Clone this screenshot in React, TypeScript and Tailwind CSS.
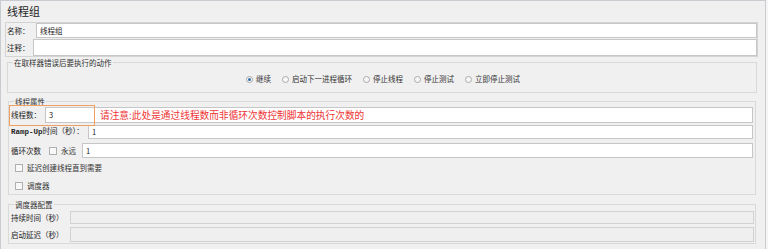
import React from "react";

const cjk = "font-['Noto_Sans_CJK_SC','Noto_Sans',sans-serif]";

function Box({ className = "", disabled = false, children }: { className?: string; disabled?: boolean; children?: React.ReactNode }) {
  return (
    <div
      className={`flex items-center border ${disabled ? "bg-[#efefef] border-[#d2d2d2]" : "bg-white border-[#c6c6c6]"} pl-[3px] text-[7.5px] text-[#222] ${className}`}
    >
      {children}
    </div>
  );
}

function Radio({ checked = false, label }: { checked?: boolean; label: string }) {
  return (
    <div className="flex items-center gap-[3px]">
      <span className="flex h-[7px] w-[7px] items-center justify-center rounded-full border border-[#a9a9a9] bg-[#f7f7f7]">
        {checked && <span className="h-[3px] w-[3px] rounded-full bg-[#2f6fb0]" />}
      </span>
      <span className="text-[7.5px] leading-[10px] text-[#333]">{label}</span>
    </div>
  );
}

function Check({ label }: { label: string }) {
  return (
    <div className="flex items-center gap-[4px]">
      <span className="h-[8px] w-[8px] border border-[#b0b0b0] bg-[#f8f8f8]" />
      <span className="text-[7.5px] leading-[10px] text-[#333]">{label}</span>
    </div>
  );
}

function Group({ title, className = "", children }: { title: string; className?: string; children?: React.ReactNode }) {
  return (
    <div className={`relative border border-[#d9d9d9] ${className}`}>
      <span className="absolute left-[5px] top-[-5px] bg-[#f0f0f0] px-[1px] text-[7.5px] leading-[9px] text-[#333]">{title}</span>
      {children}
    </div>
  );
}

export default function App() {
  return (
    <div className={`w-[768px] h-[249px] bg-[#f5f5f5] ${cjk}`}>
      <div className="h-full w-[766px] border-t border-l border-r border-[#c8ccd0] bg-[#f0f0f0]">
        <div className="h-[21px] pl-[6px] pt-[3px] text-[11px] leading-[14px] text-[#222]">线程组</div>

        <div className="ml-[4px] mr-[7px] border border-[#d4d4d4]">
          <div className="flex h-[15px] items-center">
            <span className="w-[30px] pl-[1px] text-[7.5px] text-[#222]">名称：</span>
            <Box className="h-[15px] flex-1">线程组</Box>
          </div>
          <div className="mt-[1px] flex h-[17px] items-center">
            <span className="w-[27px] pl-[1px] text-[7.5px] text-[#222]">注释：</span>
            <Box className="h-[17px] flex-1" />
          </div>
        </div>

        <Group title="在取样器错误后要执行的动作" className="mt-[5px] ml-[6px] mr-[8px] h-[31px]">
          <div className="mt-[11px] flex h-[10px] items-center justify-center gap-[11px] pl-[2px]">
            <Radio checked label="继续" />
            <Radio label="启动下一进程循环" />
            <Radio label="停止线程" />
            <Radio label="停止测试" />
            <Radio label="立即停止测试" />
          </div>
        </Group>

        <Group title="线程属性" className="mt-[8px] ml-[7px] mr-[9px] h-[94px]">
          <div className="relative mt-[5px] mr-[2px] flex h-[16px] items-center pl-[2px]">
            <span className="w-[34px] text-[7.5px] text-[#222]">线程数：</span>
            <Box className="h-[16px] flex-1">3</Box>
            <div className="absolute left-[0px] top-[-2px] h-[21px] w-[86px] border border-[#f0a060]" />
            <span className="absolute left-[91px] top-[2px] whitespace-nowrap text-[9.7px] leading-[12px] text-[#ee3434]">请注意:此处是通过线程数而非循环次数控制脚本的执行次数的</span>
          </div>
          <div className="mt-[2px] mr-[2px] flex h-[14px] items-center pl-[2px]">
            <span className="w-[77px] whitespace-nowrap text-[7.5px] text-[#222]">
              <span className="font-['Liberation_Mono',monospace] font-bold">Ramp-Up</span>时间（秒）：
            </span>
            <Box className="h-[14px] flex-1">1</Box>
          </div>
          <div className="mt-[4px] mr-[2px] flex h-[15px] items-center pl-[2px]">
            <span className="w-[38px] text-[7.5px] text-[#222]">循环次数</span>
            <div className="w-[33px]">
              <Check label="永远" />
            </div>
            <Box className="h-[15px] flex-1">1</Box>
          </div>
          <div className="mt-[4px] flex h-[11px] items-center pl-[6px]">
            <Check label="延迟创建线程直到需要" />
          </div>
          <div className="mt-[7px] flex h-[11px] items-center pl-[6px]">
            <Check label="调度器" />
          </div>
        </Group>

        <Group title="调度器配置" className="mt-[9px] ml-[7px] mr-[9px] h-[40px]">
          <div className="mt-[6px] mr-[1px] flex h-[13px] items-center pl-[2px]">
            <span className="w-[59px] text-[7.5px] text-[#222]">持续时间（秒）</span>
            <Box disabled className="h-[13px] flex-1" />
          </div>
          <div className="mt-[3px] mr-[1px] flex h-[15px] items-center pl-[2px]">
            <span className="w-[59px] text-[7.5px] text-[#222]">启动延迟（秒）</span>
            <Box disabled className="h-[15px] flex-1" />
          </div>
        </Group>
      </div>
    </div>
  );
}
